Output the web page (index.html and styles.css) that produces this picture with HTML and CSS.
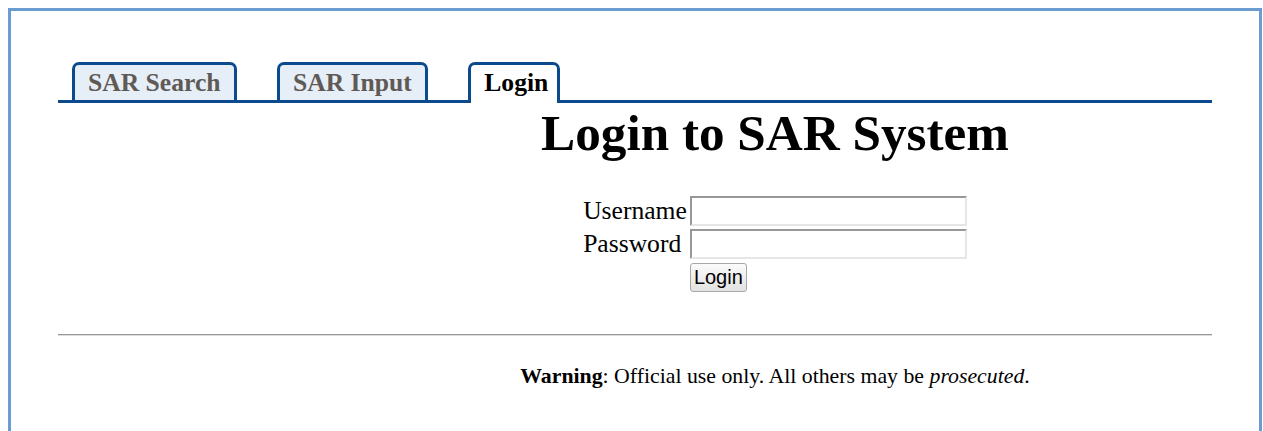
FILE: index.html
```html
<!DOCTYPE html>
<html lang="en">
<head>
<meta charset="utf-8">
<title>Login to SAR System</title>
<link rel="stylesheet" href="styles.css">
</head>
<body>
<div class="frame">
  <nav class="tabs">
    <a class="tab" href="#">SAR Search</a>
    <a class="tab" href="#">SAR Input</a>
    <a class="tab active" href="#">Login</a>
  </nav>
  <main class="content">
    <h1 class="title">Login to SAR System</h1>
    <form class="login-form">
      <label class="field-label" for="username">Username</label>
      <input class="field-input" type="text" id="username" name="username">
      <label class="field-label" for="password">Password</label>
      <input class="field-input" type="password" id="password" name="password">
      <button class="submit" type="submit">Login</button>
    </form>
  </main>
  <hr class="rule">
  <footer class="notice">
    <b>Warning</b>: Official use only. All others may be <i>prosecuted</i>.
  </footer>
</div>
</body>
</html>
```
FILE: styles.css
```css
body {
  margin: 8px 1px 0 8px;
  background: #fff;
  color: #000;
  font-family: "Liberation Serif", "Times New Roman", serif;
  font-size: 25.6px;
}

.frame {
  border: 3px solid #6a9bd1;
  border-bottom: none;
  padding: 0 47px 60px;
}

/* tab strip */
.tabs {
  display: flex;
  align-items: flex-end;
  gap: 40px;
  padding: 51px 0 0 14px;
  border-bottom: 3px solid #0b4a8c;
}

.tab {
  display: block;
  padding: 3px 13.5px 3px 13px;
  line-height: 29px;
  border: 3px solid #0b4a8c;
  border-bottom: none;
  border-radius: 7px 7px 0 0;
  background: #e6eef7;
  color: #5f5a56;
  font-weight: bold;
  text-decoration: none;
}

.tab.active {
  background: #fff;
  color: #000;
  padding: 3px 9px 6px 13px;
  margin-bottom: -3px;
}

/* main panel */
.content {
  padding-left: 280px;
}

.title {
  margin: 0;
  font-size: 51.2px;
  line-height: 59px;
  text-align: center;
}

.login-form {
  display: grid;
  grid-template-columns: auto auto;
  justify-content: center;
  align-items: center;
  column-gap: 3px;
  row-gap: 3px;
  margin-top: 34px;
}

.field-label {
  line-height: 30px;
}

.field-input {
  box-sizing: border-box;
  width: 277px;
  height: 30px;
  margin: 0;
  border: 2px solid;
  border-color: #979797 #e6e6e6 #e6e6e6 #979797;
  background: #fff;
}

.submit {
  grid-column: 2;
  justify-self: start;
  margin-top: 1px;
  padding: 2px 3px;
  font-family: "Liberation Sans", Arial, sans-serif;
  font-size: 20px;
  line-height: 23px;
  color: #000;
  border: 1px solid #a8a8a8;
  border-radius: 3px;
  background: linear-gradient(#fbfbfb, #e2e2e2);
}

.rule {
  margin: 42px 0 0;
  height: 0;
  border: none;
  border-top: 1px solid #999;
  border-bottom: 1px solid #dcdcdc;
}

.notice {
  padding-left: 280px;
  margin-top: 28px;
  text-align: center;
  font-size: 21.8px;
  line-height: 24.5px;
}
```
